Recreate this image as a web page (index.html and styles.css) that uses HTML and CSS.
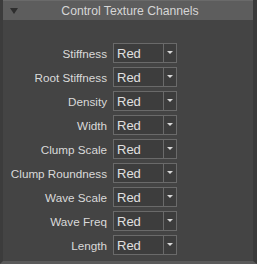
FILE: index.html
```html
<!DOCTYPE html>
<html lang="en">
<head>
<meta charset="UTF-8">
<title>Control Texture Channels</title>
<link rel="stylesheet" href="styles.css">
</head>
<body>

<div class="panel">
  <div class="header">
    <span class="arrow"></span>
    <span class="title">Control Texture Channels</span>
  </div>

  <div class="rows">
    <label>Stiffness</label>
    <div class="combo"><span>Red</span><i></i></div>

    <label>Root Stiffness</label>
    <div class="combo"><span>Red</span><i></i></div>

    <label>Density</label>
    <div class="combo"><span>Red</span><i></i></div>

    <label>Width</label>
    <div class="combo"><span>Red</span><i></i></div>

    <label>Clump Scale</label>
    <div class="combo"><span>Red</span><i></i></div>

    <label>Clump Roundness</label>
    <div class="combo"><span>Red</span><i></i></div>

    <label>Wave Scale</label>
    <div class="combo"><span>Red</span><i></i></div>

    <label>Wave Freq</label>
    <div class="combo"><span>Red</span><i></i></div>

    <label>Length</label>
    <div class="combo"><span>Red</span><i></i></div>
  </div>
</div>

</body>
</html>
```

FILE: styles.css
```css
body {
  margin: 0;
  background: #444444;
  font-family: "Liberation Sans", Arial, sans-serif;
  font-size: 11.7px;
  color: #dcdcdc;
}

.panel {
  width: 257px;
  height: 264px;
  box-sizing: border-box;
  background: #444444;
  border-left: 3px solid #3c3c3c;
  border-right: 4px solid #3a3a3a;
  border-bottom: 3px solid #5a5a5a;
}

.header {
  height: 20px;
  background: #5d5d5d;
  border-top: 1px solid #6a6a6a;
  box-sizing: border-box;
  display: flex;
  align-items: center;
  position: relative;
}

.arrow {
  position: absolute;
  left: 7px;
  top: 7px;
  width: 0;
  height: 0;
  border-left: 4px solid transparent;
  border-right: 4px solid transparent;
  border-top: 6px solid #2e2e2e;
}

.title {
  flex: 1;
  text-align: center;
  font-size: 12.2px;
  color: #d6d6d6;
  padding-left: 4px;
}

.rows {
  display: grid;
  grid-template-columns: 104px 64px;
  column-gap: 6px;
  row-gap: 4px;
  padding-top: 23px;
  align-items: center;
}

.rows label {
  text-align: right;
  color: #dadada;
  padding-top: 1px;
}

.combo {
  height: 20px;
  box-sizing: border-box;
  border: 1px solid #6a6a6a;
  background: #3d3d3d;
  display: flex;
  align-items: center;
}

.combo span {
  flex: 1;
  padding-left: 3px;
  color: #e0e0e0;
  font-size: 13px;
}

.combo i {
  width: 12px;
  height: 100%;
  border-left: 1px solid #6a6a6a;
  position: relative;
}

.combo i::after {
  content: "";
  position: absolute;
  left: 3px;
  top: 7px;
  border-left: 3px solid transparent;
  border-right: 3px solid transparent;
  border-top: 3px solid #d8d8d8;
}
```
